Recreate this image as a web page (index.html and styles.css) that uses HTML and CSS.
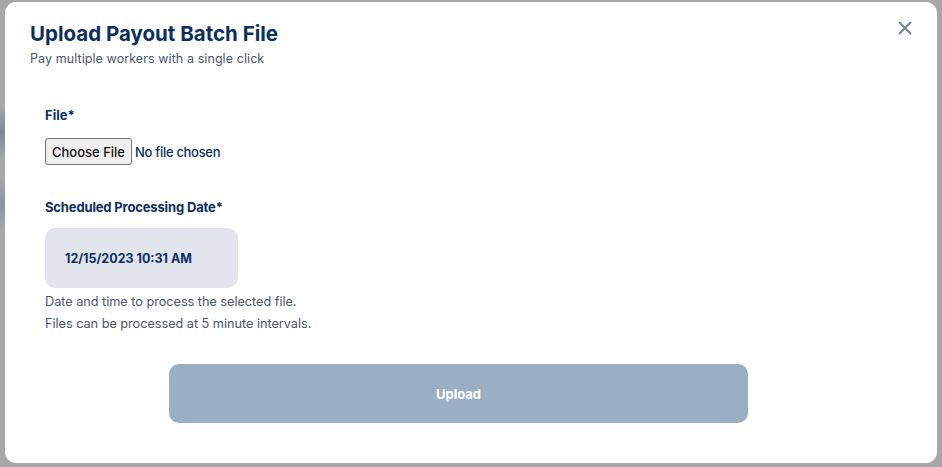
FILE: index.html
```html
<!DOCTYPE html>
<html lang="en">
<head>
<meta charset="utf-8">
<title>Upload Payout Batch File</title>
<link rel="stylesheet" href="styles.css">
</head>
<body>
<div class="backdrop">
  <div class="modal">
    <div class="modal-header">
      <div class="titles">
        <h1 class="title">Upload Payout Batch File</h1>
        <p class="subtitle">Pay multiple workers with a single click</p>
      </div>
      <button class="close" aria-label="Close">
        <svg width="14" height="14" viewBox="0 0 14 14"><path d="M1.5 1.5 L12.5 12.5 M12.5 1.5 L1.5 12.5" stroke="#6e8199" stroke-width="1.8" stroke-linecap="round"/></svg>
      </button>
    </div>
    <form class="form">
      <div class="field">
        <label class="label">File*</label>
        <div class="file-row">
          <span class="file-btn">Choose File</span>
          <span class="file-name">No file chosen</span>
        </div>
      </div>
      <div class="field field-date">
        <label class="label">Scheduled Processing Date*</label>
        <div class="date-box">12/15/2023 10:31 AM</div>
        <p class="help">Date and time to process the selected file.<br>Files can be processed at 5 minute intervals.</p>
      </div>
      <div class="actions">
        <button type="button" class="upload">Upload</button>
      </div>
    </form>
  </div>
</div>
</body>
</html>
```

FILE: styles.css
```css
* { box-sizing: border-box; }
html, body { margin: 0; padding: 0; }
body {
  width: 942px;
  height: 467px;
  background: #a7a7a7;
  font-family: "Inter", "Lato", "Noto Sans", sans-serif;
  overflow: hidden;
}
.backdrop {
  padding: 2px 5px 4px 5px;
  height: 467px;
  background:
    radial-gradient(ellipse 14px 26px at 2px 132px, #7d8799 0%, rgba(167,167,167,0) 100%),
    radial-gradient(ellipse 14px 26px at 2px 205px, #8a93a4 0%, rgba(167,167,167,0) 100%),
    #a7a7a7;
}
.modal {
  background: #fff;
  border-radius: 11px;
  height: 461px;
  padding: 19px 25px 0 25px;
}
.modal-header {
  display: flex;
  justify-content: space-between;
  align-items: flex-start;
}
.title {
  margin: 0;
  font-size: 20.5px;
  line-height: 26px;
  font-weight: 700;
  color: #0c2f5e;
  letter-spacing: 0;
}
.subtitle {
  margin: 4px 0 0;
  font-size: 12.5px;
  line-height: 16px;
  color: #4b5669;
  letter-spacing: 0.08px;
}
.close {
  background: none;
  border: none;
  padding: 0;
  margin-top: 0;
  width: 14px;
  height: 14px;
  display: flex;
}
.form {
  padding: 0 40px 0 15px;
  margin-top: 39px;
}
.field { display: flex; flex-direction: column; align-items: flex-start; }
.label {
  font-size: 13px;
  font-weight: 700;
  color: #0c2f5e;
  line-height: 18px;
}
.field-date .label { letter-spacing: -0.15px; }
.file-row {
  display: flex;
  align-items: center;
  gap: 3px;
  margin-top: 14px;
}
.file-btn {
  display: inline-flex;
  align-items: center;
  height: 27px;
  padding: 0 6px;
  border: 1px solid #767676;
  border-radius: 3px;
  background: #efefef;
  color: #111;
  font-size: 13px;
  font-weight: 500;
}
.file-name {
  color: #0c2f5e;
  font-size: 13px;
  font-weight: 500;
  letter-spacing: -0.3px;
}
.field-date { margin-top: 33px; }
.date-box {
  margin-top: 12px;
  width: 193px;
  height: 60px;
  border-radius: 10px;
  background: #e2e5ed;
  color: #0c2f5e;
  font-weight: 700;
  font-size: 12.5px;
  letter-spacing: 0;
  display: flex;
  align-items: center;
  padding-left: 20px;
}
.help {
  margin: 3px 0 0;
  font-size: 12.75px;
  line-height: 22px;
  color: #4b5669;
  letter-spacing: -0.05px;
}
.actions {
  display: flex;
  margin-top: 29px;
  justify-content: center;
}
.upload {
  width: 70%;
  height: 59px;
  border: none;
  border-radius: 10px;
  background: #9aafc4;
  color: #fff;
  font-family: inherit;
  font-weight: 700;
  font-size: 13px;
}
```
